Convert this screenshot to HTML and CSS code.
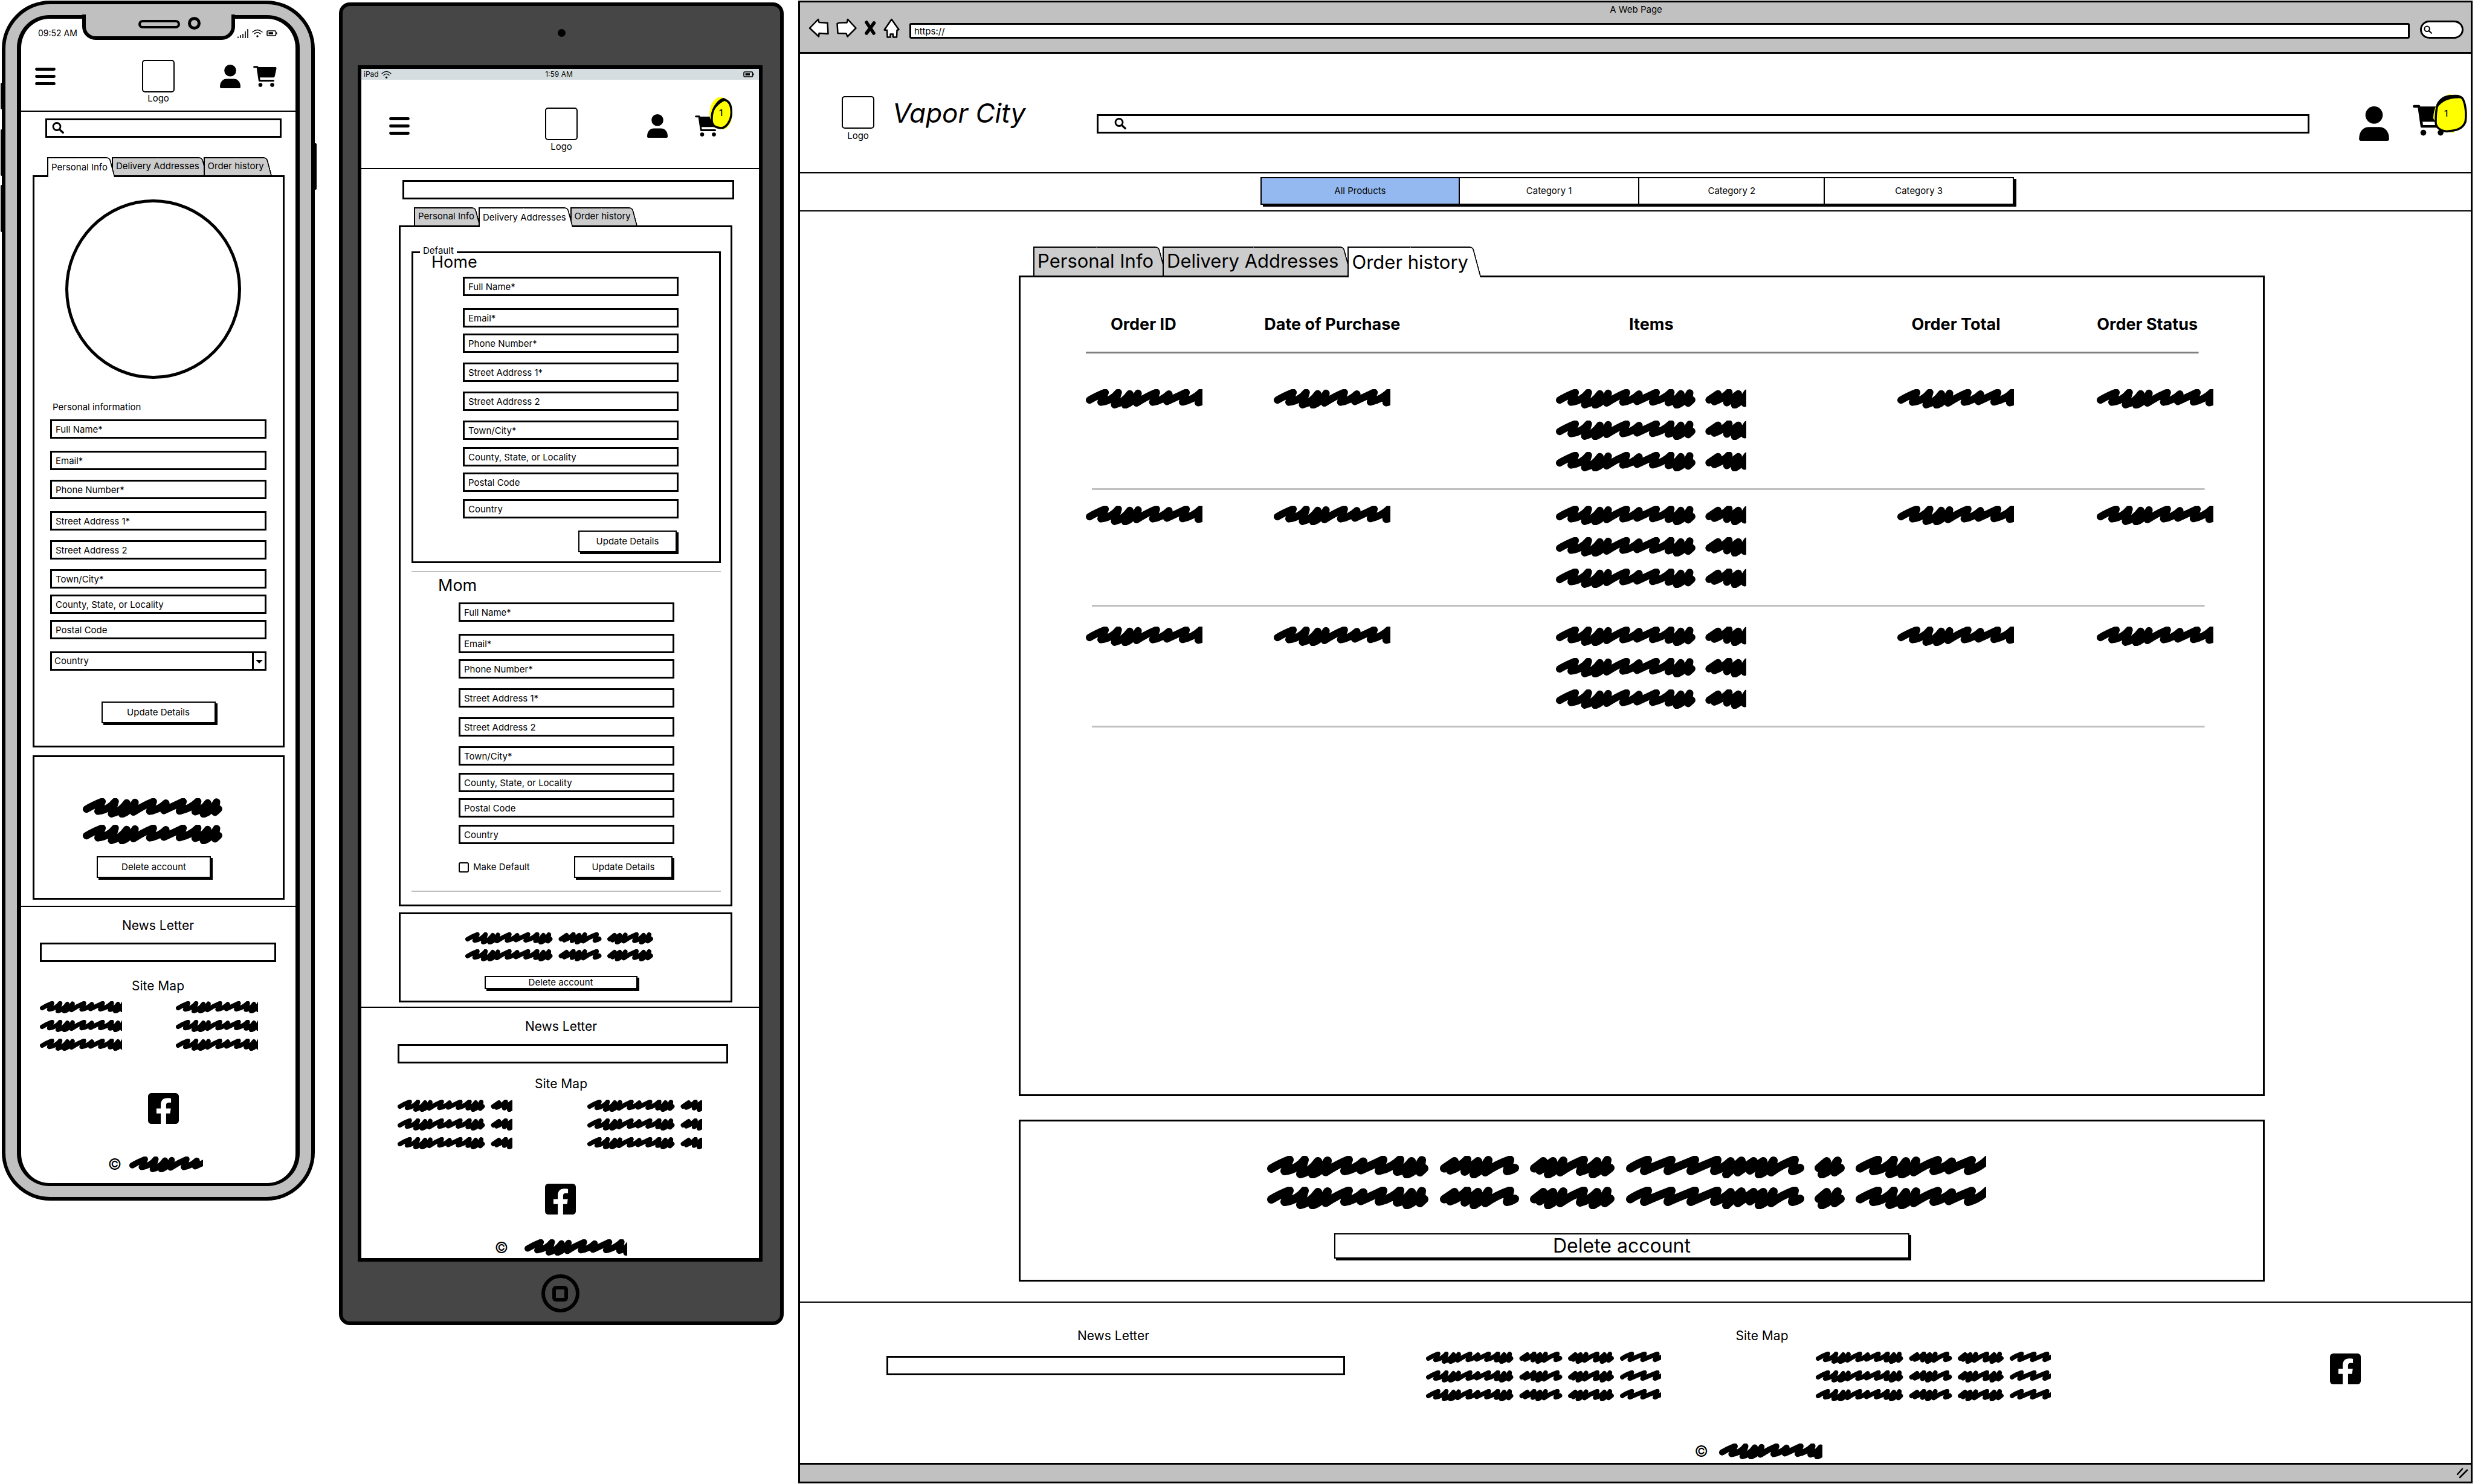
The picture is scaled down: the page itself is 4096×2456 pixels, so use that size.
FILE: index.html
```html
<!DOCTYPE html>
<html lang="en">
<head>
<meta charset="utf-8">
<title>Vapor City account wireframes</title>
<link rel="stylesheet" href="styles.css">
</head>
<body>
<svg class="sprite" aria-hidden="true">
  <symbol id="scribble" viewBox="0 0 1190 37" preserveAspectRatio="xMinYMid slice">
    <g fill="none" stroke="#000" stroke-width="14" stroke-linecap="round" stroke-linejoin="round">
      <path d="M7 21Q20 13 37 6.400L29 25Q50 22 62 6.400L55 30Q72 26 84 9L75 30.600Q90 26 100 8L97 26.600Q116 14 135 6.400L128 25Q146 22 159 9.400L155 23.600Q172 16 192 6.400L185 24.600Q206 20 220 6L215 26Q228 24 239 9L231 30.600Q246 26 256 7.200L253 27L260 20.600"/>
      <path d="M293 20.600L310 9L303 24Q320 18 331 6L327 26L349 9L342 30.600Q356 24 366 7L361 27Q380 14 402 6.400L397 25Q404 24 410 20"/>
      <path d="M442 20.600L457 9L451 24L473 9L465 30.600Q480 24 490 8L485 27Q504 14 524 6.400L518 26Q534 22 546 9L539 30.600Q554 24 563 7L559 27L568 20"/>
      <path d="M601 20.600Q612 13 630 6.400L624 25Q644 16 669 6.400L663 25Q684 16 708 6.400L701 25Q722 16 745 6.400L740 25Q756 20 767 9L760 30.600L785 8L779 27L805 9L799 24L821 9L814 30.600Q828 26 838 8L834 27Q852 14 873 6.400L869 25Q876 24 882 20"/>
      <path d="M913 20L926 9L918 30.600Q932 26 944 8L939 27L949 20"/>
      <path d="M981 20.600Q994 13 1011 6.400L1003 25Q1024 22 1037 6.400L1030 30Q1046 26 1057 9L1050 30.600Q1064 26 1074 8L1070 27Q1090 14 1110 7L1103 25Q1122 20 1133 9.400L1128 23.600Q1144 16 1166 7L1160 25Q1178 20 1192 6.400"/>
    </g>
  </symbol>
  <symbol id="person" viewBox="0 0 34 39">
    <circle cx="17" cy="9.800" r="9.800"/>
    <path d="M0 37C0 28 5 23.500 11 23.500H23C29 23.500 34 28 34 37Q34 39 32 39H2Q0 39 0 37Z"/>
  </symbol>
  <symbol id="cart" viewBox="0 0 39 35">
    <path d="M6 2H37Q39 2.200 38.500 4.500L35.800 17Q35.200 19.200 33.500 19.200H9Z"/>
    <path d="M1.600 1.800H7L10.300 24.400H33.500" fill="none" stroke="#000" stroke-width="3" stroke-linecap="round" stroke-linejoin="round"/>
    <circle cx="12" cy="31.600" r="3.300"/><circle cx="31.500" cy="31.600" r="3.300"/>
  </symbol>
  <symbol id="lens" viewBox="0 0 20 20">
    <circle cx="8" cy="7.500" r="6" fill="none" stroke="#000" stroke-width="2.800"/>
    <path d="M12.500 12.200L18.300 17.500" stroke="#000" stroke-width="3.200" stroke-linecap="round"/>
  </symbol>
  <symbol id="facebook" viewBox="0 32 448 448">
    <path d="M400 32H48A48 48 0 0 0 0 80v352a48 48 0 0 0 48 48h137.250V327.690h-63V256h63v-54.640c0-62.150 37-96.480 93.670-96.480 27.140 0 55.520 4.840 55.520 4.840v61h-31.270c-30.810 0-40.420 19.120-40.420 38.730V256h68.780l-11 71.690h-57.780V480H400a48 48 0 0 0 48-48V80a48 48 0 0 0-48-48z"/>
  </symbol>
  <symbol id="burger" viewBox="0 0 34 29">
    <path d="M2.500 2.500H31.500M2.500 14.500H31.500M2.500 26.500H31.500" stroke="#000" stroke-width="4.800" stroke-linecap="round"/>
  </symbol>
  <symbol id="wifi" viewBox="0 0 18 14">
    <path d="M1 5Q9 -2 17 5M4 8Q9 3.500 14 8" fill="none" stroke="#000" stroke-width="1.400" stroke-linecap="round"/>
    <circle cx="9" cy="12" r="1.700"/>
  </symbol>
  <symbol id="battery" viewBox="0 0 18 10">
    <rect x="1" y="1" width="14.500" height="8" rx="1.500" fill="none" stroke="#000" stroke-width="1.600"/>
    <path d="M3.500 3.200H11V6.800H3.500ZM16 3.500H17.500V6.500H16Z"/>
  </symbol>
</svg>

<main class="board">

  <section class="phone" aria-label="Phone">
    <i class="side side-a"></i><i class="side side-b"></i><i class="side side-c"></i><i class="side side-d"></i>
    <div class="notch"><i class="speaker"></i><i class="lens-hole"></i></div>
    <div class="phone-screen">
      <div class="phone-status">
        <span>09:52 AM</span>
        <span class="signals">
          <svg width="18" height="15" viewBox="0 0 18 15"><path d="M1 12.500V15M5 10V15M9 8V15M13 4V15M17 0V15" stroke="#000" stroke-width="1.600"/></svg>
          <svg width="18" height="14"><use href="#wifi"/></svg>
          <svg width="18" height="10"><use href="#battery"/></svg>
        </span>
      </div>
      <header class="device-head">
        <button class="icon-button" aria-label="Menu"><svg width="34" height="29"><use href="#burger"/></svg></button>
        <a class="logo" href="#"><i class="logo-box"></i>Logo</a>
        <div class="head-icons">
          <a href="#" aria-label="Account"><svg width="34" height="39"><use href="#person"/></svg></a>
          <a href="#" aria-label="Cart"><svg width="39" height="35"><use href="#cart"/></svg></a>
        </div>
      </header>
      <div class="search"><svg class="search-icon" width="20" height="20"><use href="#lens"/></svg><input class="search-input" type="search" aria-label="Search"></div>
      <nav class="tabs">
        <button class="tab tab-active">Personal Info</button>
        <button class="tab">Delivery Addresses</button>
        <button class="tab">Order history</button>
      </nav>
      <form class="panel profile">
        <div class="avatar"></div>
        <h2 class="form-title">Personal information</h2>
        <div class="fields">
          <input class="field gap-l" placeholder="Full Name*" aria-label="Full Name">
          <input class="field gap-m" placeholder="Email*" aria-label="Email">
          <input class="field gap-l" placeholder="Phone Number*" aria-label="Phone Number">
          <input class="field gap-m" placeholder="Street Address 1*" aria-label="Street Address 1">
          <input class="field gap-m" placeholder="Street Address 2" aria-label="Street Address 2">
          <input class="field gap-s" placeholder="Town/City*" aria-label="Town or City">
          <input class="field gap-s" placeholder="County, State, or Locality" aria-label="County, State, or Locality">
          <input class="field gap-l" placeholder="Postal Code" aria-label="Postal Code">
          <div class="select-box"><select class="field" aria-label="Country"><option>Country</option></select></div>
        </div>
        <button class="button button-mid" type="button">Update Details</button>
      </form>
      <section class="panel removal">
        <svg class="scribble"><use href="#scribble"/></svg>
        <svg class="scribble"><use href="#scribble"/></svg>
        <button class="button button-mid">Delete account</button>
      </section>
      <footer class="foot">
        <h3 class="foot-title">News Letter</h3>
        <input class="field news" type="email" aria-label="News Letter">
        <h3 class="foot-title">Site Map</h3>
        <div class="links">
          <div class="link-list"><svg class="scribble"><use href="#scribble"/></svg><svg class="scribble"><use href="#scribble"/></svg><svg class="scribble"><use href="#scribble"/></svg></div>
          <div class="link-list"><svg class="scribble"><use href="#scribble"/></svg><svg class="scribble"><use href="#scribble"/></svg><svg class="scribble"><use href="#scribble"/></svg></div>
        </div>
        <a class="social" href="#" aria-label="Facebook"><svg width="51" height="51"><use href="#facebook"/></svg></a>
        <div class="rights"><span>©</span><svg class="scribble"><use href="#scribble"/></svg></div>
      </footer>
    </div>
  </section>

  <section class="tablet" aria-label="Tablet">
    <div class="tablet-top"><i class="camera"></i></div>
    <div class="tablet-screen">
      <div class="tablet-status">
        <span class="carrier">iPad <svg width="17" height="13"><use href="#wifi"/></svg></span>
        <span>1:59 AM</span>
        <svg width="18" height="10"><use href="#battery"/></svg>
      </div>
      <header class="device-head">
        <button class="icon-button" aria-label="Menu"><svg width="34" height="29"><use href="#burger"/></svg></button>
        <a class="logo" href="#"><i class="logo-box"></i>Logo</a>
        <div class="head-icons">
          <a href="#" aria-label="Account"><svg width="34" height="39"><use href="#person"/></svg></a>
          <a class="cart" href="#" aria-label="Cart"><svg width="39" height="35"><use href="#cart"/></svg>
            <span class="badge"><svg class="badge-shape" viewBox="0 0 38 53"><path d="M18 0C8 0 0 13 0 29C2 44 12 53 24 53C34 49 38 38 38 26C38 10 28 0 18 0Z" fill="#ff0"/><path d="M23 3C33 6 36 12 36.500 25C36 38 29 50 20 51C8 50 3.500 46 4 35C4 22 10 9 23 3Z" fill="#ff0" stroke="#000" stroke-width="3.500"/><path d="M5 26C7 13 14 3 24 1L34 9L25 6C16 10 10 17 5 26Z"/></svg><b>1</b></span></a>
        </div>
      </header>
      <div class="search"><input class="search-input" type="search" aria-label="Search"></div>
      <nav class="tabs">
        <button class="tab">Personal Info</button>
        <button class="tab tab-active">Delivery Addresses</button>
        <button class="tab">Order history</button>
      </nav>
      <div class="panel addresses">
        <form>
          <fieldset class="default-box">
            <legend>Default</legend>
            <h2 class="place">Home</h2>
            <div class="fields">
              <input class="field gap-l" placeholder="Full Name*" aria-label="Full Name">
              <input class="field gap-s" placeholder="Email*" aria-label="Email">
              <input class="field gap-m" placeholder="Phone Number*" aria-label="Phone Number">
              <input class="field gap-m" placeholder="Street Address 1*" aria-label="Street Address 1">
              <input class="field gap-m" placeholder="Street Address 2" aria-label="Street Address 2">
              <input class="field gap-n" placeholder="Town/City*" aria-label="Town or City">
              <input class="field gap-s" placeholder="County, State, or Locality" aria-label="County, State, or Locality">
              <input class="field gap-n" placeholder="Postal Code" aria-label="Postal Code">
              <input class="field" placeholder="Country" aria-label="Country">
              <div class="actions"><button class="button" type="button">Update Details</button></div>
            </div>
          </fieldset>
        </form>
        <hr class="rule">
        <form class="other">
          <h2 class="place">Mom</h2>
          <div class="fields">
            <input class="field gap-l" placeholder="Full Name*" aria-label="Full Name">
            <input class="field gap-s" placeholder="Email*" aria-label="Email">
            <input class="field gap-m" placeholder="Phone Number*" aria-label="Phone Number">
            <input class="field gap-m" placeholder="Street Address 1*" aria-label="Street Address 1">
            <input class="field gap-m" placeholder="Street Address 2" aria-label="Street Address 2">
            <input class="field gap-n" placeholder="Town/City*" aria-label="Town or City">
            <input class="field gap-s" placeholder="County, State, or Locality" aria-label="County, State, or Locality">
            <input class="field gap-n" placeholder="Postal Code" aria-label="Postal Code">
            <input class="field" placeholder="Country" aria-label="Country">
            <div class="actions"><label class="check"><input type="checkbox"> Make Default</label><button class="button" type="button">Update Details</button></div>
          </div>
        </form>
        <hr class="rule">
      </div>
      <section class="panel removal">
        <svg class="scribble"><use href="#scribble"/></svg>
        <svg class="scribble"><use href="#scribble"/></svg>
        <button class="button">Delete account</button>
      </section>
      <footer class="foot">
        <h3 class="foot-title">News Letter</h3>
        <input class="field news" type="email" aria-label="News Letter">
        <h3 class="foot-title">Site Map</h3>
        <div class="links">
          <div class="link-list"><svg class="scribble"><use href="#scribble"/></svg><svg class="scribble"><use href="#scribble"/></svg><svg class="scribble"><use href="#scribble"/></svg></div>
          <div class="link-list"><svg class="scribble"><use href="#scribble"/></svg><svg class="scribble"><use href="#scribble"/></svg><svg class="scribble"><use href="#scribble"/></svg></div>
        </div>
        <a class="social" href="#" aria-label="Facebook"><svg width="51" height="51"><use href="#facebook"/></svg></a>
        <div class="rights"><span>©</span><svg class="scribble"><use href="#scribble"/></svg></div>
      </footer>
    </div>
    <button class="home-button" aria-label="Home"><i></i></button>
  </section>

  <section class="browser" aria-label="Browser">
    <div class="chrome">
      <div class="chrome-title">A Web Page</div>
      <div class="chrome-row">
        <button class="icon-button" aria-label="Back"><svg width="34" height="32" viewBox="0 0 34 32"><path d="M2 16.500L16 2L17.500 7L31.500 8L32.500 26L17.500 25L17 30.500Z" fill="#fff" stroke="#000" stroke-width="2.500" stroke-linejoin="round"/></svg></button>
        <button class="icon-button" aria-label="Forward"><svg width="34" height="32" viewBox="0 0 34 32"><path d="M1.500 9Q3 7 17.500 7.500L19 2L32.500 16.500L18.500 30.500L16.500 25.500L2.500 25Z" fill="#fff" stroke="#000" stroke-width="2.500" stroke-linejoin="round"/></svg></button>
        <button class="icon-button" aria-label="Stop"><svg width="20" height="30" viewBox="0 0 20 30"><path d="M4 6L16 24M16.500 7L4 24" stroke="#000" stroke-width="5.500" stroke-linecap="round"/></svg></button>
        <button class="icon-button" aria-label="Home page"><svg width="27" height="33" viewBox="0 0 27 33"><path d="M13.500 2L25.500 19L22.500 20L22 31.500H16V26.500H11.500V31.500H6.500L6 20L1.500 19.500Z" fill="#fff" stroke="#000" stroke-width="2.500" stroke-linejoin="round"/></svg></button>
        <input class="url" value="https://" aria-label="Address">
        <div class="quick"><svg width="14" height="15"><use href="#lens"/></svg><input type="search" aria-label="Web search"></div>
      </div>
    </div>
    <header class="site-head">
      <div class="brand">
        <a class="logo" href="#"><i class="logo-box"></i>Logo</a>
        <h1 class="site-name">Vapor City</h1>
      </div>
      <div class="search"><svg class="search-icon" width="20" height="20"><use href="#lens"/></svg><input class="search-input" type="search" aria-label="Search"></div>
      <a class="account" href="#" aria-label="Account"><svg width="50" height="57"><use href="#person"/></svg></a>
      <a class="cart" href="#" aria-label="Cart"><svg width="57" height="52"><use href="#cart"/></svg>
        <span class="badge"><svg class="badge-shape" viewBox="0 0 56 64"><path d="M30 0C16 0 0 16 0 40L12 60L34 64Z" fill="#ff0"/><path d="M30 3C40 2 46 3 49 8C54 18 55 35 53 46C48 58 38 60 22 61.500C10 60 4 54 4 46C4 36 5 24 7 17C12 7 20 3 30 3Z" fill="#ff0" stroke="#000" stroke-width="3.500"/><path d="M7 22C10 8 20 1 32 1Q44 0 48 5L54 17Q49 7 44 6.500Q18 6 7 22Z"/></svg><b>1</b></span></a>
    </header>
    <nav class="categories">
      <div class="category-bar">
        <button class="category category-on">All Products</button>
        <button class="category">Category 1</button>
        <button class="category">Category 2</button>
        <button class="category">Category 3</button>
      </div>
    </nav>
    <nav class="tabs">
      <button class="tab">Personal Info</button>
      <button class="tab">Delivery Addresses</button>
      <button class="tab tab-active">Order history</button>
    </nav>
    <div class="panel history">
      <table class="orders">
        <colgroup><col class="col-id"><col class="col-date"><col class="col-items"><col class="col-total"><col class="col-status"></colgroup>
        <thead><tr><th>Order ID</th><th>Date of Purchase</th><th>Items</th><th>Order Total</th><th>Order Status</th></tr></thead>
        <tbody>
          <tr>
            <td><svg class="scribble"><use href="#scribble"/></svg></td><td><svg class="scribble"><use href="#scribble"/></svg></td>
            <td><svg class="scribble item"><use href="#scribble"/></svg><svg class="scribble item"><use href="#scribble"/></svg><svg class="scribble item"><use href="#scribble"/></svg></td>
            <td><svg class="scribble"><use href="#scribble"/></svg></td><td><svg class="scribble"><use href="#scribble"/></svg></td>
          </tr>
          <tr>
            <td><svg class="scribble"><use href="#scribble"/></svg></td><td><svg class="scribble"><use href="#scribble"/></svg></td>
            <td><svg class="scribble item"><use href="#scribble"/></svg><svg class="scribble item"><use href="#scribble"/></svg><svg class="scribble item"><use href="#scribble"/></svg></td>
            <td><svg class="scribble"><use href="#scribble"/></svg></td><td><svg class="scribble"><use href="#scribble"/></svg></td>
          </tr>
          <tr>
            <td><svg class="scribble"><use href="#scribble"/></svg></td><td><svg class="scribble"><use href="#scribble"/></svg></td>
            <td><svg class="scribble item"><use href="#scribble"/></svg><svg class="scribble item"><use href="#scribble"/></svg><svg class="scribble item"><use href="#scribble"/></svg></td>
            <td><svg class="scribble"><use href="#scribble"/></svg></td><td><svg class="scribble"><use href="#scribble"/></svg></td>
          </tr>
        </tbody>
      </table>
    </div>
    <section class="panel removal">
      <svg class="scribble"><use href="#scribble"/></svg>
      <svg class="scribble"><use href="#scribble"/></svg>
      <button class="button">Delete account</button>
    </section>
    <footer class="foot">
      <div class="foot-row">
        <div class="foot-news">
          <h3 class="foot-title">News Letter</h3>
          <input class="field news" type="email" aria-label="News Letter">
        </div>
        <div class="foot-map">
          <h3 class="foot-title">Site Map</h3>
          <div class="links">
            <div class="link-list"><svg class="scribble"><use href="#scribble"/></svg><svg class="scribble"><use href="#scribble"/></svg><svg class="scribble"><use href="#scribble"/></svg></div>
            <div class="link-list"><svg class="scribble"><use href="#scribble"/></svg><svg class="scribble"><use href="#scribble"/></svg><svg class="scribble"><use href="#scribble"/></svg></div>
          </div>
        </div>
        <a class="social" href="#" aria-label="Facebook"><svg width="51" height="51"><use href="#facebook"/></svg></a>
      </div>
      <div class="rights"><span>©</span><svg class="scribble"><use href="#scribble"/></svg></div>
    </footer>
    <div class="chrome-foot"><svg width="20" height="18" viewBox="0 0 20 18"><path d="M2 11L10 2M6 16L18 4" stroke="#000" stroke-width="2.500" stroke-linecap="round"/></svg></div>
  </section>

</main>
</body>
</html>
```
FILE: styles.css
```css
*, *::before, *::after { box-sizing: border-box; }
body { margin: 0; background: #fff; color: #000; font-family: Inter, "Open Sans", sans-serif; font-size: 15px; line-height: 20px; }
button, input, select { font: inherit; color: inherit; margin: 0; border-radius: 0; }
h1, h2, h3 { margin: 0; font-weight: 400; }
a { color: inherit; text-decoration: none; }
svg { display: block; flex: none; }
input::placeholder { color: #000; opacity: 1; }
input[type="search"] { appearance: none; }
.sprite { position: absolute; width: 0; height: 0; }

.board { display: grid; grid-template-columns: minmax(0, 518fr) minmax(0, 800fr) minmax(0, 2771fr); align-items: start; padding: 1px 4px 0 3px; }
.tablet { margin: 3px 24px 0 40px; }

/* shared parts */
.icon-button { display: block; padding: 0; border: 0; background: none; }
.logo { display: flex; flex-direction: column; align-items: center; }
.logo-box { width: 54px; height: 54px; border: 2px solid #000; border-radius: 5px; }
.field, .search { display: block; width: 100%; height: 32px; border: 3px solid #000; background: #fff; padding: 0 6px; }
.search { display: flex; align-items: center; padding: 0 8px; width: auto; }
.search-input { flex: 1; min-width: 0; height: 100%; border: 0; background: none; padding: 0 8px; outline: 0; }
.gap-s { margin-bottom: 10px; }
.gap-n { margin-bottom: 12px; }
.gap-m { margin-bottom: 16px; }
.gap-l { margin-bottom: 20px; }
.button { height: 36px; padding: 0; border: 2px solid #000; background: #fff; box-shadow: 3px 3px 0 #000; text-align: center; }
.panel { border: 3px solid #000; background: #fff; }
.scribble { overflow: hidden; }
.removal { display: flex; flex-direction: column; align-items: center; padding-right: 16px; }
.rule { height: 2px; margin: 0; border: 0; background: #c0c0c0; }
.head-icons { display: flex; align-items: center; justify-content: flex-end; }
.cart { position: relative; display: block; }
.badge { position: absolute; display: flex; align-items: center; justify-content: center; }
.badge-shape { position: absolute; inset: 0; width: 100%; height: 100%; }
.badge b { position: relative; font-weight: 500; }

/* folder tabs: square on the left, slanted on the right */
.tabs { display: flex; align-items: flex-start; }
.tab { position: relative; z-index: 0; height: 30px; padding: 0 3px 0 7px; border: 0; background: none; white-space: nowrap; --fill: #ccc; }
.tab::before, .tab::after { content: ""; position: absolute; z-index: -1; top: 0; bottom: 0; background: var(--fill); border-top: 2px solid #000; }
.tab::before { left: 0; width: 60%; border-left: 2px solid #000; }
.tab::after { right: 0; width: 50%; border-right: 2px solid #000; border-top-right-radius: 6px; transform: skewX(15deg); transform-origin: top; }
.tab-active { z-index: 1; height: 33px; margin-bottom: -3px; --fill: #fff; }

.foot { border-top: 2px solid #000; }
.foot-title { font-size: 21px; line-height: 28px; text-align: center; }
.link-list { display: flex; flex-direction: column; gap: 11px; }
.link-list .scribble { width: 100%; height: 20px; }
.rights { display: flex; align-items: center; justify-content: center; font-size: 25px; line-height: 26px; }
.social { display: block; }

.device-head { display: grid; grid-template-columns: 1fr auto 1fr; border-bottom: 2px solid #000; }
.device-head .icon-button { align-self: start; height: 54px; justify-self: start; }

/* phone */
.phone { position: relative; border: 6px solid #000; border-radius: 80px; background: #c0c0c0; padding: 18px 19px; }
.phone-screen { border: 6px solid #000; border-width: 6px 7px 5px; border-radius: 54px; background: #fff; }
.side { position: absolute; width: 6px; background: #000; border-radius: 2px; left: -8px; }
.side-a { top: 130px; height: 44px; }
.side-b { top: 207px; height: 77px; }
.side-c { top: 299px; height: 78px; }
.side-d { left: auto; right: -9px; top: 230px; height: 77px; }
.notch { position: absolute; top: 17px; left: 25%; right: 25%; height: 42px; border: 6px solid #000; border-top: 0; border-radius: 0 0 22px 22px; background: #c0c0c0; }
.speaker { position: absolute; left: 87px; top: 9px; width: 69px; height: 14px; border: 4px solid #000; border-radius: 7px; background: #c0c0c0; }
.lens-hole { position: absolute; left: 169px; top: 4px; width: 21px; height: 21px; border: 5px solid #000; border-radius: 50%; background: #c0c0c0; }
.phone-status { display: flex; justify-content: space-between; padding: 14px 30px 0 28px; font-size: 14px; }
.signals { display: flex; align-items: center; gap: 6px; }
.phone .device-head { padding: 34px 23px 10px; }
.phone .head-icons { height: 54px; gap: 21px; padding-right: 8px; }
.phone .search { margin: 11px 23px 0 40px; }
.phone .tabs { margin: 32px 0 0 43px; gap: 2px; }
.phone .tab { padding-right: 5px; }
.phone .panel { margin: 0 18px 0 19px; }
.profile { padding: 37px 27px 37px 26px; display: flex; flex-direction: column; }
.avatar { width: 291px; max-width: 100%; aspect-ratio: 291 / 297; margin-left: 25px; border: 5px solid #000; border-radius: 50%; }
.form-title { margin: 37px 0 10px 4px; font-size: 15px; line-height: 20px; }
.select-box { position: relative; }
.select-box select { appearance: none; padding: 0 4px; }
.select-box::before { content: ""; position: absolute; right: 21px; top: 0; bottom: 0; width: 3px; background: #000; }
.select-box::after { content: ""; position: absolute; right: 6px; top: 14px; border: 6px solid transparent; border-top-color: #000; border-bottom: 0; }
.button-mid { align-self: center; width: 189px; }
.profile .button-mid { margin-top: 51px; }
.phone .removal { margin-top: 13px; padding-top: 68px; padding-bottom: 33px; }
.phone .removal .scribble { width: 235px; height: 32px; margin-bottom: 12px; }
.phone .removal .button { margin-top: 8px; }
.phone .foot { margin-top: 10px; padding: 17px 32px 18px 31px; }
.phone .news { margin: 14px 0 26px; }
.phone .links { display: flex; justify-content: space-between; padding: 11px 30px 0 0; }
.phone .link-list { flex: 0 0 136px; }
.phone .social { width: 51px; margin: 70px auto 54px; padding-left: 17px; box-sizing: content-box; }
.phone .rights { gap: 13px; height: 26px; padding-right: 8px; }
.phone .rights .scribble { width: 122px; height: 26px; }

/* tablet */
.tablet { border: 6px solid #000; border-radius: 18px; background: #464646; padding: 0 29px 15px 25px; }
.tablet-top { height: 98px; display: flex; justify-content: center; padding: 38px 0 0 4px; }
.camera { width: 13px; height: 13px; border-radius: 50%; background: #000; }
.tablet-screen { border: 6px solid #000; background: #fff; }
.tablet-status { display: grid; grid-template-columns: 1fr auto 1fr; align-items: center; padding: 0 8px 0 4px; background: #d6dde0; font-size: 12px; line-height: 18px; }
.tablet-status > svg { justify-self: end; }
.carrier { display: flex; align-items: center; gap: 4px; }
.tablet .device-head { padding: 46px 42px 24px 46px; }
.tablet .logo { line-height: 22px; }
.tablet .device-head .icon-button { height: 60px; }
.tablet .head-icons { height: 60px; gap: 45px; padding-right: 25px; }
.tablet .badge { left: 24px; top: -30px; width: 38px; height: 53px; }
.tablet .search { margin: 18px 41px 0 68px; }
.tablet .tabs { margin: 13px 0 0 87px; gap: 4px; }
.tablet .panel { margin: 0 44px 0 62px; }
.addresses { padding: 31px 16px 21px 18px; }
.default-box { margin: 0; padding: 0 67px 15px 82px; border: 3px solid #000; min-width: 0; }
.default-box legend { margin-left: -71px; padding: 0 5px 4px; line-height: 16px; }
.place { font-size: 27px; line-height: 28px; }
.default-box .place { margin: 0 0 17px -52px; line-height: 14px; }
.tablet .fields { display: flex; flex-direction: column; }
.addresses .rule { margin-top: 13px; }
.other { padding: 8px 77px 0 78px; }
.other .place { margin: 0 0 14px -34px; }
.other + .rule { margin-top: 21px; }
.actions { display: flex; justify-content: flex-end; align-items: center; padding: 20px 3px 0 0; }
.actions .button { width: 163px; }
.check { display: flex; align-items: center; gap: 7px; margin-right: auto; }
.check input { appearance: none; width: 17px; height: 17px; border: 2px solid #000; border-radius: 3px; background: #fff; }
.tablet .removal { margin-top: 10px; padding-top: 30px; padding-bottom: 19px; }
.tablet .removal .scribble { width: 317px; height: 20px; margin-bottom: 8px; }
.tablet .removal .button { width: 253px; height: 22px; margin-top: 16px; line-height: 18px; }
.tablet .foot { margin-top: 7px; padding: 17px 51px 4px 60px; }
.tablet .foot-title, .tablet .rights { padding-right: 6px; }
.tablet .news { margin: 15px 0 20px; }
.tablet .links { display: flex; gap: 124px; padding-top: 12px; }
.tablet .link-list { flex: 0 0 190px; }
.tablet .social { width: 51px; margin: 57px auto 41px; padding-right: 8px; box-sizing: content-box; }
.tablet .rights { gap: 27px; }
.tablet .rights .scribble { width: 170px; height: 27px; }
.home-button { display: flex; align-items: center; justify-content: center; width: 63px; height: 63px; margin: 21px auto 0; border: 6px solid #000; border-radius: 50%; background: none; padding: 0; }
.home-button i { width: 26px; height: 26px; border: 6px solid #000; border-radius: 6px; }

/* browser window */
.browser { border: 3px solid #000; }
.chrome { background: #c1c1c1; border-bottom: 3px solid #000; padding: 2px 12px 22px 14px; }
.chrome-title { text-align: center; }
.chrome-row { display: flex; gap: 12px; height: 36px; margin-top: 2px; }
.url { flex: 1; min-width: 0; align-self: flex-end; height: 26px; margin-left: 4px; padding: 0 5px; border: 3px solid #000; border-radius: 3px; }
.quick { display: flex; align-items: center; align-self: flex-end; width: 72px; height: 30px; margin-left: 5px; padding-left: 3px; border: 3px solid #000; border-radius: 15px; background: #fff; }
.quick input { width: 40px; height: 20px; border: 0; padding: 0; background: none; }
.site-head { display: flex; align-items: flex-start; padding: 70px 39px 48px 69px; border-bottom: 2px solid #000; }
.brand { flex: 0 0 422px; display: flex; gap: 30px; }
.brand .logo { line-height: 24px; }
.site-name { font-size: 44px; line-height: 56px; font-style: italic; white-space: nowrap; }
.site-head .search { flex: 1; margin-top: 30px; padding-left: 26px; }
.account { margin: 17px 39px 0 82px; }
.site-head .cart { margin-top: 14px; }
.site-head .badge { left: 34px; top: -17px; width: 56px; height: 64px; }
.site-head .badge b { right: 7px; }
.categories { padding: 6px 0 9px 6px; border-bottom: 2px solid #000; }
.category-bar { display: flex; width: 45.200%; margin: 0 auto; border: 2px solid #000; box-shadow: 4px 3px 0 #000; }
.category { flex: 298 1 0; height: 42px; border: 0; border-left: 2px solid #000; background: #fff; }
.category-on { flex-grow: 330; border-left: 0; background: #94b9f1; }
.category:nth-child(3) { flex-grow: 308; }
.category:nth-child(4) { flex-grow: 314; }
.browser .tabs { margin: 58px 0 0 386px; gap: 7px; font-size: 31px; line-height: 40px; }
.browser .tab { height: 48px; padding-right: 8px; }
.browser .tab-active { height: 51px; }
.browser .panel { margin: 0 341px 0 362px; }
.history { min-height: 1358px; padding: 62px 42px 0 108px; }
.orders { width: 100%; table-layout: fixed; border-collapse: collapse; }
.col-id { width: 10%; }
.col-date { width: 22.800%; }
.col-items { width: 32.600%; }
.col-total { width: 20.300%; }
.col-status { width: 14.300%; }
.orders th { padding: 0 0 32px; font-size: 27px; line-height: 32px; white-space: nowrap; }
.orders th:last-child { padding-right: 26px; }
.orders td { padding: 26px 0 31px; vertical-align: top; }
.orders tbody tr:first-child td { padding-top: 59px; }
.orders tbody tr:last-child td { padding-top: 33px; }
.orders thead tr { background: linear-gradient(#808080, #808080) no-repeat left bottom / calc(100% - 64px) 3px; }
.orders tbody tr { background: linear-gradient(#c0c0c0, #c0c0c0) no-repeat 10px 100% / calc(100% - 64px) 3px; }
.orders .scribble { width: 193px; height: 32px; margin: 0 auto; }
.orders .item { width: 315px; }
.orders .item + .item { margin-top: 20px; }
.browser .removal { margin-top: 39px; padding: 57px 50px 35px 0; }
.browser .removal .scribble { width: 1190px; max-width: 100%; height: 37px; margin-bottom: 14px; }
.browser .removal .button { width: 47.500%; height: 42px; margin: 26px 16px 0 0; font-size: 32px; line-height: 36px; }
.browser .foot { margin-top: 33px; padding: 41px 0 6px 143px; }
.foot-row { display: flex; align-items: flex-start; }
.foot-news { flex: 0 0 759px; }
.foot-news .foot-title { padding-right: 8px; }
.browser .news { margin-top: 19px; }
.foot-map { margin-left: 134px; }
.foot-map .foot-title { padding-left: 78px; }
.browser .links { display: flex; gap: 256px; padding-top: 12px; }
.browser .link-list { flex: 0 0 389px; }
.browser .social { margin: 43px 0 0 462px; }
.browser .rights { justify-content: flex-start; gap: 18px; margin-top: 70px; padding-left: 51%; }
.browser .rights .scribble { width: 171px; height: 26px; }
.chrome-foot { display: flex; justify-content: flex-end; align-items: center; height: 31px; padding-right: 4px; border-top: 3px solid #000; background: #c1c1c1; }
```
